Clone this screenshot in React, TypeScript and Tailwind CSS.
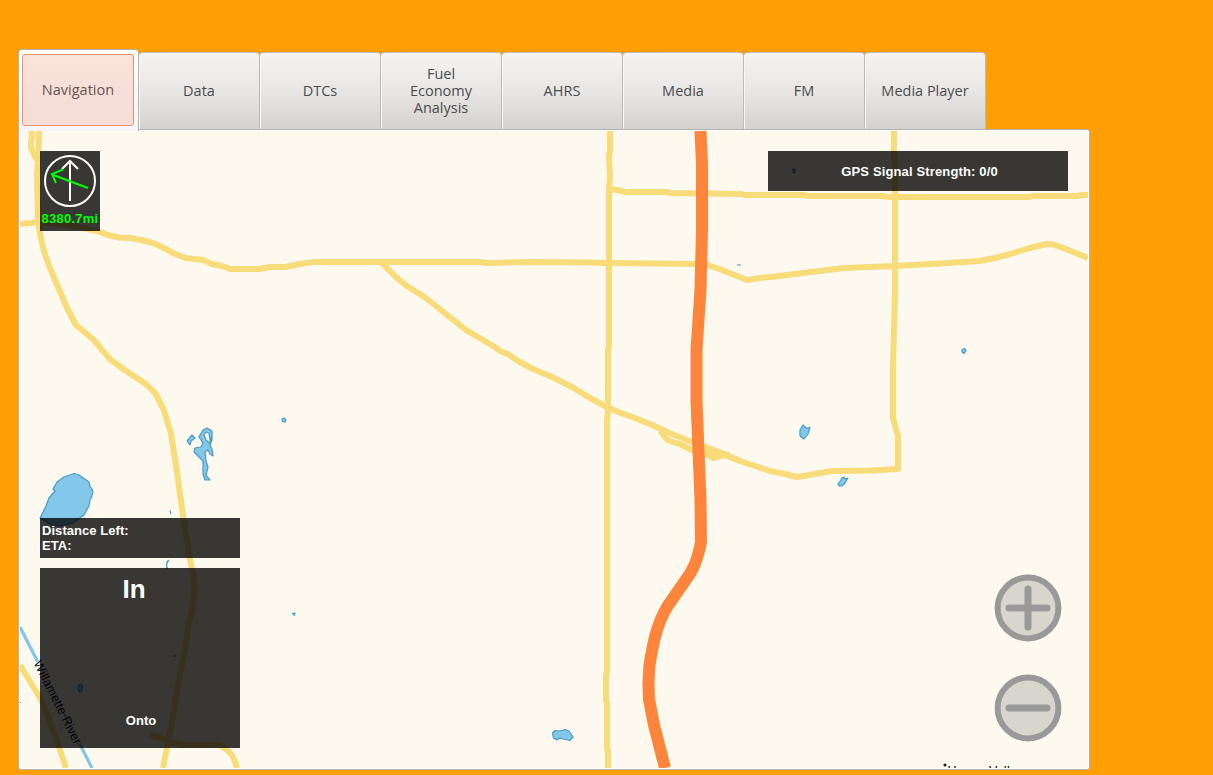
const TABS = ["Data", "DTCs", "Fuel Economy Analysis", "AHRS", "Media", "FM", "Media Player"];

const ROADS = [
  "M20 224 L40 222 L62 224 L78 227 L97 231 L108 235 L119 237.5 L130 238 L141 240 L153 243 L162 247 L175 254 L186 258 L203 260 L212 264 L222 266 L230 269 L259 269 L270 267 L285 267 L300 264 L313 262 L480 262 L486 263 L530 262 L590 262.5 L608 263 L702 264",
  "M31.5 131 L32 138 C29 146 32 152 38 161",
  "M39 131 L38 160 L37 175 L38 218 C40 240 47 262 53 275 L67 308 L76 325 L94 340 L103 351 L111 360 L129 373 L146 384 L155 393 L164 410 L171 434 L177 472 L184 523 L191 565 C196 580 196 602 189 622 L185 650 L178 685 L172 722 L163 768",
  "M382 263 C395 277 400 281 407 286 L426 298 L446 314 L466 330 L495 347 L500 351 L508 354 L518 361 L533 369 L552 377 L572 387 L590 398 L607 407 L618 412 L635 418 L650 424 L672 434 L697 444 L722 453 L740 461 L755 466 L770 471 L785 474 L797 477 L815 474 L832 471 L870 470.5 L898 469 L898 436 L893 418 L893 370 L895 290 L895 165 L894 156 L894 131",
  "M660 431 C665 436 666 440 670 441 L682 445 L696 452 L706 454 L713 458 L724 455 L738 460",
  "M701 449 L715 454 L730 455",
  "M610 131 L610 151 L609 157 L610 176 L609 190 L609 345 L608 350 L608 410 L607 420 L607 672 L606 674 L606 700 L607 703 L607 749 L608 751 L608 768",
  "M609 189 L617 190 L626 192 L668 192 L670 193 L740 194 L745 195 L803 195 L808 196 L883 196 L888 197 L1028 197 L1033 196 L1078 196 L1082 195 L1088 195",
  "M702 263 L722 270 L747 280 L760 278 L775 276.5 L803 273 L844 268 L895 266 L912 265 L948 263 L979 261 L995 258 L1010 254 L1030 248 L1047 244 L1053 244.5 L1066 249 L1088 258",
  "M20 665 C30 682 38 693 44 706 L56 738 L66 768",
  "M150 734 L163 739 L170 742 L184 745 L219 745 C232 751 234 758 237 768",
];

const LAKES = [
  "M40 518 L46 506 L49 498 L55 491 L53 489 L57 482 L64 477 L74 473.5 L79 475 L89 482 L90 486 L93 491 L92 496 L90 500 L89 506 L84 515 L73 523 L60 526 L50 524 Z",
  "M187 441 L192 435 L195 438 L191 441 L190 445 Z",
  "M199 437 L203 430 L207 428 L212 431 L212 440 L210 440 L209 433 L206 432 L204 435 L206 440 L209 443 L212 436 L212 440 L210 445 L212 449 L213 456 L210 454 L208 450 L205 452 L206 461 L208 467 L206 475 L210 480 L205 480 L203 474 L203 461 L199 457 L194 452 L195 448 L201 447 L203 443 Z",
  "M803 425 L806 428 L810 427.5 L808 434 L804 439 L800 436 L800 430 Z",
  "M838 484 L841 480 L841.5 478 L844 477 L845 479 L848 478 L845 483 L842 486 L839 486 Z",
  "M552.5 733 L555 730.5 L560 731 L565 729.5 L569 731 L573 737 L570 740.5 L563 739 L560 738 L557 740 L553.5 738 Z",
  "M962 349.5 L965 348.5 L966 351 L964 353.5 L962 352 Z",
  "M282 419 L284.5 418 L286 420 L285 422 L282.5 421.5 Z",
  "M170 510.5 L171 514",
  "M169 560 L167 562 L166.5 566 L167.5 568 L165.5 569.5",
  "M292 613.5 L295 613 L294 616",
  "M79 685 L81 684 L83 687 L81.5 691 L79 692 L78 688 Z",
  "M792.5 169.5 L795 169 L795 172 L793.5 173 Z",
  "M174 655.5 L175 655 L175 656.5 L174 656.5 Z",
];

function MapCanvas() {
  return (
    <svg className="block h-[637px] w-[1068px] font-normal" viewBox="20 131 1068 637">
      <rect x="20" y="131" width="1068" height="637" fill="#fef9ee" />
      <path d="M20 627 L92 768" stroke="#83c8ea" strokeWidth="3.3" fill="none" />
      <g fill="#83c8ea" stroke="#4a9bc0" strokeWidth="1.2" strokeLinejoin="round">
        {LAKES.map((d) => (
          <path key={d} d={d} />
        ))}
      </g>
      <path d="M737 265 H741" stroke="#a3c6da" strokeWidth="2" />
      <path d="M20 702.5 H21" stroke="#4a9bc0" strokeWidth="1" />
      <g fill="none" stroke="#f8dc7a" strokeWidth="6" strokeLinejoin="round">
        {ROADS.map((d) => (
          <path key={d} d={d} />
        ))}
      </g>
      <path d="M152 734.5 L162 739" stroke="#f8dc7a" strokeWidth="6" strokeLinecap="round" />
      <path
        d="M700.5 131 L702 165 L702 230 L700.5 290 L696.5 350 L696.5 400 L698.5 450 L700.5 500 L701 542 C697 563 692 572 685 581 L667 607 C657 624 653 643 649.5 665 L648.5 683 L649 699 L654 725 L665 768"
        fill="none"
        stroke="#ff853c"
        strokeWidth="12"
        strokeLinejoin="round"
      />
      <text
        transform="translate(33.5 663) rotate(63.5)"
        fontFamily="Liberation Sans"
        fontSize="12.5"
        fill="#000"
        stroke="#fff"
        strokeWidth="1.6"
        paintOrder="stroke"
        textLength="92"
      >
        Willamette River
      </text>
      <circle cx="945" cy="765" r="1.6" fill="#222" />
      <text x="947.5" y="775" fontFamily="Liberation Sans" fontSize="12.5" fill="#000" textLength="76">
        Happy Valley
      </text>
    </svg>
  );
}

function Compass() {
  return (
    <div className="absolute left-5 top-5 h-20 w-[60px] bg-black/78">
      <svg className="block h-[60px] w-[60px]" viewBox="0 0 60 60" fill="none" strokeWidth="2">
        <circle cx="30" cy="30" r="25" stroke="#fff" />
        <path d="M30 50 V10 M22 18 L30 10 L38 18" stroke="#fff" />
        <path d="M48 37 L12 23.5 M23 18.5 L12 23 L16 32" stroke="#0f0" />
      </svg>
      <div className="text-center leading-[15px] tracking-[0.25px] text-[#00ff00]">8380.7mi</div>
    </div>
  );
}

function ZoomButton({ plus }: { plus?: boolean }) {
  return (
    <button className="block size-[68px]" aria-label={plus ? "Zoom in" : "Zoom out"}>
      <svg viewBox="0 0 68 68" className="block size-[68px]" stroke="#999" fill="none">
        <circle cx="34" cy="34" r="30.4" fill="#d8d5cd" strokeWidth="6" />
        <path d={plus ? "M15 34 H53 M34 15 V53" : "M15 34 H53"} strokeWidth="7" strokeLinecap="round" />
      </svg>
    </button>
  );
}

export default function App() {
  return (
    <div className="h-[775px] w-[1213px] overflow-hidden bg-[#ff9f05] pl-[18px] pt-[50px]">
      <nav className="flex h-[79px] items-end font-['Open_Sans',sans-serif] text-[14.5px] leading-[17px] text-[#4c4c4c]">
        <button className="relative z-10 -mb-0.5 h-[82px] w-[121px] rounded-t-[4px] border border-b-0 border-[#b5b2ae] bg-[#f8f6f5] bg-linear-to-b from-white to-[#f6f4f4] p-[3px] pb-[5px]">
          <span className="flex h-[72px] w-[112px] items-center justify-center rounded-[3px] border border-[#f0906c] bg-linear-to-b from-[#fce4dc] via-[#f6dfd8] to-[#f5ded7] text-[#6a5450]">
            Navigation
          </span>
        </button>
        {TABS.map((tab) => (
          <button
            key={tab}
            className="flex h-[77px] w-[121px] items-center justify-center rounded-t-[4px] border border-b-0 border-l-0 border-[#bdbab7] bg-linear-to-b from-[#f4f3f2] via-[#e9e7e6] to-[#d4d2ce] px-3 pb-0.5 text-center shadow-[inset_1px_1px_0_#f8f7f6]"
          >
            <span className="max-w-[90px]">{tab}</span>
          </button>
        ))}
      </nav>
      <main className="h-[641px] w-[1072px] rounded-[3px] rounded-tl-none border border-[#b5b2b0] bg-white p-px font-['Liberation_Sans',sans-serif] text-[13px] font-bold text-white">
        <div className="relative h-[637px] w-[1068px] overflow-hidden">
          <MapCanvas />
          <Compass />
          <div className="absolute left-[748px] top-5 flex h-10 w-[300px] items-center justify-center bg-black/78 pl-[3px] pt-0.5 tracking-[0.14px]">
            GPS Signal Strength: 0/0
          </div>
          <div className="absolute left-5 top-[387px] h-10 w-[200px] bg-black/78 px-0.5 pt-[5px] leading-[15px] tracking-[0.05px]">
            <div>Distance Left:</div>
            <div>ETA:</div>
          </div>
          <div className="absolute left-5 top-[437px] flex h-[180px] w-[200px] flex-col items-center justify-between bg-black/78 pb-5 pr-3">
            <div className="pt-1.5 text-[26px] leading-[30px]">In</div>
            <div className="pl-[14px] leading-[15px]">Onto</div>
          </div>
          <div className="absolute left-[974px] top-[443px] flex flex-col gap-8">
            <ZoomButton plus />
            <ZoomButton />
          </div>
        </div>
      </main>
    </div>
  );
}
